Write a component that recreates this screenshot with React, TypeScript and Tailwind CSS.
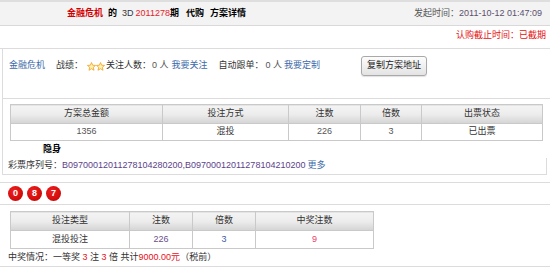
import React from 'react';

const font = { fontFamily: '"Liberation Sans", "Noto Sans CJK SC", sans-serif' };

const Star = () => (
  <svg width="9" height="9" viewBox="0 0 10 10">
    <polygon
      points="5,0.6 6.3,3.6 9.5,3.8 7,5.9 7.8,9.2 5,7.4 2.2,9.2 3,5.9 0.5,3.8 3.7,3.6"
      fill="#fff3b0"
      stroke="#f0a020"
      strokeWidth="0.9"
    />
  </svg>
);

const Ball = ({ n }: { n: string }) => (
  <div className="w-[15px] h-[15px] rounded-full bg-[radial-gradient(circle_at_40%_35%,#f02020,#c00000)] text-white font-bold text-[9px] flex items-center justify-center">
    {n}
  </div>
);

const th = 'border border-[#c9c9c9] bg-gradient-to-b from-[#f4f4f4] via-[#ececec] to-[#d4d4d4] font-normal h-[19px] p-0 text-center';
const td = 'border border-[#c9c9c9] h-[17px] p-0 text-center';

export default function App() {
  return (
    <div className="w-[550px] h-[267px] bg-white text-[9px] text-[#333] overflow-hidden" style={font}>
      {/* Title bar */}
      <div className="h-[26px] bg-[#f3f3f3] border-t-2 border-t-[#dedede] border-b border-b-[#d9d9d9] flex items-center">
        <div className="pl-[67px] font-bold text-black flex items-center">
          <span className="text-[#d40000]">金融危机</span>
          <span className="ml-[5px]">的</span>
          <span className="ml-[5px] font-normal text-[#334]">3D</span>
          <span className="ml-[2px] font-normal text-[#e8202a]">2011278</span>
          <span>期</span>
          <span className="ml-[7px]">代购</span>
          <span className="ml-[6px]">方案详情</span>
        </div>
        <div className="ml-auto pr-[8px] text-[#555]">
          发起时间：<span className="text-[#5a4f6e]">2011-10-12 01:47:09</span>
        </div>
      </div>

      {/* Deadline */}
      <div className="h-[23px] flex items-center justify-end pr-[4px] pb-[3px] text-[#e41010] border-b border-[#dcdcdc]">
        认购截止时间：已截期
      </div>

      <div className="ml-[2px] border-l border-[#dcdcdc]">
        {/* Owner info */}
        <div className="h-[50px] border-b border-[#dcdcdc] pt-[7px] flex items-start">
          <div className="w-[358px] h-[20px] flex items-center">
            <span className="ml-[6px] text-[#3d6aa8]">金融危机</span>
            <span className="ml-[11px]">战绩：</span>
            <span className="ml-[4px] flex">
              <Star />
              <Star />
            </span>
            <span className="ml-[1px]">关注人数：</span>
            <span className="ml-[1px] text-[#555]">0 人</span>
            <span className="ml-[3px] text-[#3d6aa8]">我要关注</span>
            <span className="ml-[11px]">自动跟单：</span>
            <span className="ml-[2px] text-[#555]">0 人</span>
            <span className="ml-[2px] text-[#3d6aa8]">我要定制</span>
          </div>
          <button className="w-[66px] h-[20px] border border-[#a9a9a9] rounded-[3px] bg-gradient-to-b from-[#fdfdfd] to-[#e3e3e3] text-[9px] text-[#222] shadow-[0_1px_1px_rgba(0,0,0,0.12)]">
            复制方案地址
          </button>
        </div>

        {/* Scheme table */}
        <div className="pt-[5px]">
          <table className="ml-[7px] w-[533px] border-collapse table-fixed">
            <thead>
              <tr>
                <th className={`${th} w-[152px]`}>方案总金额</th>
                <th className={`${th} w-[126px]`}>投注方式</th>
                <th className={`${th} w-[72px]`}>注数</th>
                <th className={`${th} w-[61px]`}>倍数</th>
                <th className={th}>出票状态</th>
              </tr>
            </thead>
            <tbody>
              <tr>
                <td className={`${td} text-[#555]`}>1356</td>
                <td className={td}>混投</td>
                <td className={`${td} text-[#555]`}>226</td>
                <td className={`${td} text-[#555]`}>3</td>
                <td className={td}>已出票</td>
              </tr>
            </tbody>
          </table>
          <div className="h-[17px] flex items-center pl-[40px] font-bold text-black">隐身</div>
          <div className="h-[17px] mr-[3px] border-r border-b border-[#dcdcdc] flex items-center pl-[5px]">
            彩票序列号：
            <span className="text-[#5b3f8a]">B09700012011278104280200,B09700012011278104210200</span>
            <span className="ml-[2px] text-[#3d6aa8]">更多</span>
          </div>
        </div>
      </div>

      <div className="h-[8px] border-b border-[#dcdcdc]" />

      {/* Balls */}
      <div className="h-[22px] border-b border-[#dcdcdc] flex items-center gap-[4px] pl-[8px]">
        <Ball n="0" />
        <Ball n="8" />
        <Ball n="7" />
      </div>

      {/* Prize table */}
      <div className="pt-[6px] h-[62px] border-b border-[#dcdcdc]">
        <table className="ml-[10px] w-[364px] border-collapse table-fixed">
          <thead>
            <tr>
              <th className={`${th} w-[119px] h-[17px]`}>投注类型</th>
              <th className={`${th} w-[63px] h-[17px]`}>注数</th>
              <th className={`${th} w-[63px] h-[17px]`}>倍数</th>
              <th className={`${th} h-[17px]`}>中奖注数</th>
            </tr>
          </thead>
          <tbody>
            <tr>
              <td className={`${td} h-[18px]`}>混投投注</td>
              <td className={`${td} h-[18px] text-[#6a4f8a]`}>226</td>
              <td className={`${td} h-[18px] text-[#3d5aa8]`}>3</td>
              <td className={`${td} h-[18px] text-[#e8406a]`}>9</td>
            </tr>
          </tbody>
        </table>
        <div className="pl-[8px] pt-[2px] leading-[12px]">
          中奖情况：一等奖 <span className="text-[#e81020]">3</span> 注 <span className="text-[#e81020]">3</span> 倍 共计
          <span className="text-[#e81020]">9000.00元</span>（税前）
        </div>
      </div>
    </div>
  );
}
